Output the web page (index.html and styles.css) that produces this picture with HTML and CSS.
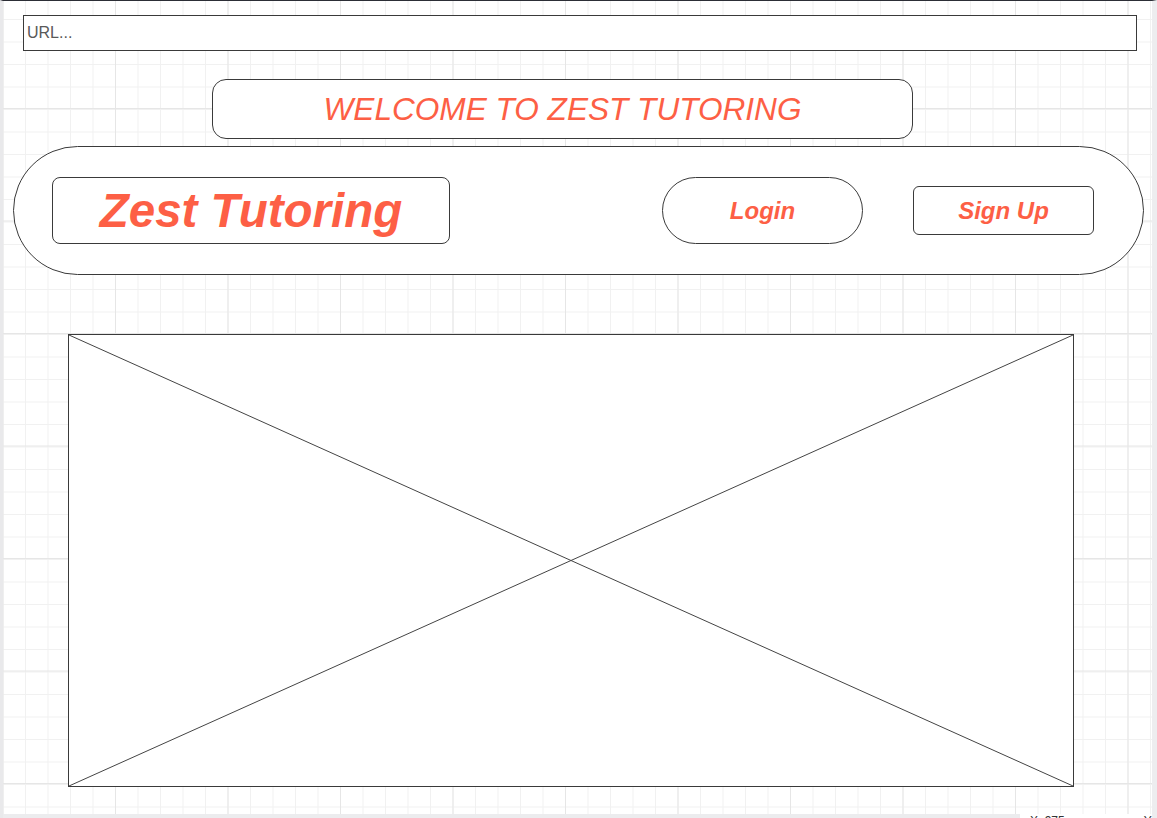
FILE: index.html
```html
<!DOCTYPE html>
<html lang="en">
<head>
    <meta charset="UTF-8">
    <meta name="viewport" content="width=device-width, initial-scale=1.0">
    <title>Zest Tutoring</title>
    <link rel="stylesheet" href="styles.css">
</head>
<body>
    <div class="canvas">
        <div class="url-bar">URL...</div>

        <div class="welcome">WELCOME TO ZEST TUTORING</div>

        <nav class="navbar">
            <a href="#" class="logo">Zest Tutoring</a>
            <a href="#" class="btn-login">Login</a>
            <a href="#" class="btn-signup">Sign Up</a>
        </nav>

        <div class="hero-placeholder">
            <svg viewBox="0 0 100 100" preserveAspectRatio="none">
                <line x1="0" y1="0" x2="100" y2="100" vector-effect="non-scaling-stroke"></line>
                <line x1="100" y1="0" x2="0" y2="100" vector-effect="non-scaling-stroke"></line>
            </svg>
        </div>

        <div class="statusbar">
            <div class="coords">
                <span>X: 975 px</span>
                <span>Y: 820 px</span>
            </div>
        </div>
    </div>
</body>
</html>
```

FILE: styles.css
```css
* {
    margin: 0;
    padding: 0;
    box-sizing: border-box;
}

body {
    height: 818px;
    overflow: hidden;
    font-family: "Liberation Sans", Arial, sans-serif;
    background-color: #fff;
}

a {
    text-decoration: none;
}

.canvas {
    height: 818px;
    overflow: hidden;
    border-top: 1px solid #2c2e36;
    border-left: 3px solid #e9e9eb;
    border-right: 5px solid #ededef;
    padding-top: 14px;
    padding-left: 20px;
    display: flex;
    flex-direction: column;
    align-items: flex-start;
    background-color: #fff;
    background-image:
        linear-gradient(to right, #e6e6e6 1px, transparent 1px),
        linear-gradient(to bottom, #e6e6e6 1px, transparent 1px),
        linear-gradient(to right, #f1f1f1 1px, transparent 1px),
        linear-gradient(to bottom, #f1f1f1 1px, transparent 1px);
    background-size: 112.5px 112.5px, 112.5px 112.5px, 22.5px 22.5px, 22.5px 22.5px;
    background-position: -0.5px -5.5px, -0.5px -5.5px, -0.5px -4.5px, -0.5px -4.5px;
}

.canvas > * {
    flex-shrink: 0;
}

.url-bar {
    width: 1114px;
    height: 36px;
    border: 1px solid #3a3a3a;
    background-color: #fff;
    color: #595959;
    font-size: 16px;
    line-height: 34px;
    padding-left: 3px;
}

.welcome {
    margin-top: 28px;
    margin-left: 189px;
    width: 701px;
    height: 60px;
    border: 1px solid #3a3a3a;
    border-radius: 14px;
    background-color: #fff;
    color: #fd5f45;
    font-size: 31.6px;
    font-style: italic;
    display: flex;
    align-items: center;
    justify-content: center;
}

.navbar {
    margin-top: 7px;
    margin-left: -10px;
    width: 1131px;
    height: 129px;
    border: 1px solid #3a3a3a;
    border-radius: 65px;
    background-color: #fff;
    display: flex;
    align-items: center;
    padding: 0 49px 0 38px;
    gap: 50px;
}

.logo {
    width: 398px;
    height: 67px;
    border: 1px solid #3a3a3a;
    border-radius: 8px;
    color: #fd5f45;
    font-size: 47.5px;
    font-weight: bold;
    font-style: italic;
    display: flex;
    align-items: center;
    justify-content: center;
}

.btn-login {
    margin-left: auto;
    width: 201px;
    height: 67px;
    border: 1px solid #3a3a3a;
    border-radius: 34px;
    color: #fd5f45;
    font-size: 24px;
    font-weight: bold;
    font-style: italic;
    display: flex;
    align-items: center;
    justify-content: center;
}

.btn-signup {
    width: 181px;
    height: 49px;
    border: 1px solid #3a3a3a;
    border-radius: 6px;
    color: #fd5f45;
    font-size: 24px;
    font-weight: bold;
    font-style: italic;
    display: flex;
    align-items: center;
    justify-content: center;
}

.hero-placeholder {
    margin-top: 59px;
    margin-left: 45px;
    width: 1006px;
    height: 453px;
    border: 1px solid #3a3a3a;
    background-color: #fff;
}

.hero-placeholder svg {
    display: block;
    width: 100%;
    height: 100%;
}

.hero-placeholder line {
    stroke: #444;
    stroke-width: 1;
}

.statusbar {
    margin-top: 27px;
    margin-left: -20px;
    width: calc(100% + 20px);
    height: 24px;
    background-color: #ececee;
    display: flex;
    justify-content: flex-end;
}

.coords {
    width: 132px;
    overflow: hidden;
    white-space: nowrap;
    background-color: #fff;
    display: flex;
    gap: 63px;
    font-size: 12px;
    color: #333;
    padding: 0 0 0 10px;
}
```
